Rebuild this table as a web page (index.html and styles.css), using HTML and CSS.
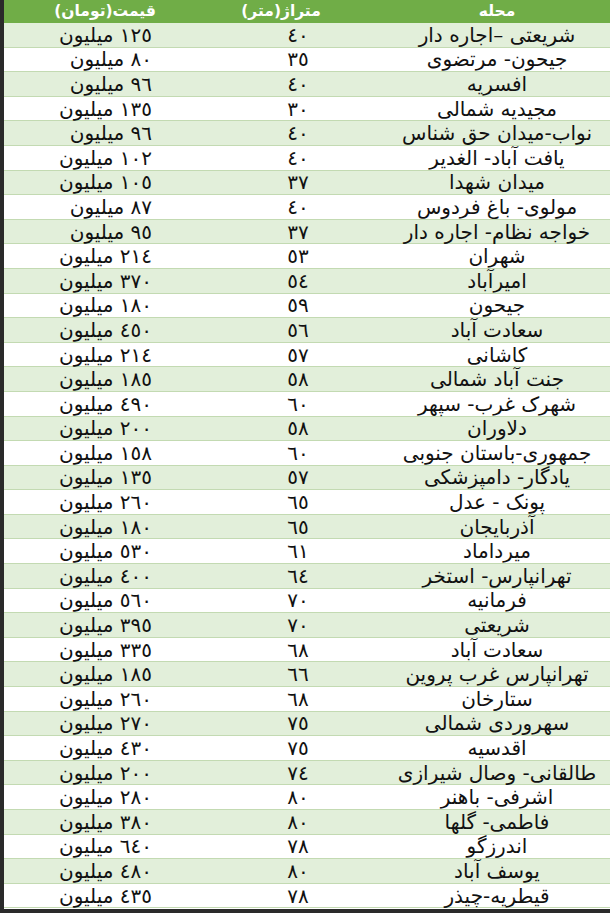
FILE: index.html
```html
<!DOCTYPE html>
<html lang="fa" dir="rtl">
<head>
<meta charset="utf-8">
<title>قیمت آپارتمان</title>
<link rel="stylesheet" href="styles.css">
</head>
<body>
<div class="sheet">
  <div class="row head"><div class="c name">محله</div><div class="c area">متراژ(متر)</div><div class="c price">قیمت(تومان)</div></div>
  <div class="row band"><div class="c name">شریعتی –اجاره دار</div><div class="c area">٤٠</div><div class="c price">١٢٥ میلیون</div></div>
  <div class="row"><div class="c name">جیحون- مرتضوی</div><div class="c area">٣٥</div><div class="c price">٨٠ میلیون</div></div>
  <div class="row band"><div class="c name">افسریه</div><div class="c area">٤٠</div><div class="c price">٩٦ میلیون</div></div>
  <div class="row"><div class="c name">مجیدیه شمالی</div><div class="c area">٣٠</div><div class="c price">١٣٥ میلیون</div></div>
  <div class="row band"><div class="c name">نواب-میدان حق شناس</div><div class="c area">٤٠</div><div class="c price">٩٦ میلیون</div></div>
  <div class="row"><div class="c name">یافت آباد- الغدیر</div><div class="c area">٤٠</div><div class="c price">١٠٢ میلیون</div></div>
  <div class="row band"><div class="c name">میدان شهدا</div><div class="c area">٣٧</div><div class="c price">١٠٥ میلیون</div></div>
  <div class="row"><div class="c name">مولوی- باغ فردوس</div><div class="c area">٤٠</div><div class="c price">٨٧ میلیون</div></div>
  <div class="row band"><div class="c name">خواجه نظام- اجاره دار</div><div class="c area">٣٧</div><div class="c price">٩٥ میلیون</div></div>
  <div class="row"><div class="c name">شهران</div><div class="c area">٥٣</div><div class="c price">٢١٤ میلیون</div></div>
  <div class="row band"><div class="c name">امیرآباد</div><div class="c area">٥٤</div><div class="c price">٣٧٠ میلیون</div></div>
  <div class="row"><div class="c name">جیحون</div><div class="c area">٥٩</div><div class="c price">١٨٠ میلیون</div></div>
  <div class="row band"><div class="c name">سعادت آباد</div><div class="c area">٥٦</div><div class="c price">٤٥٠ میلیون</div></div>
  <div class="row"><div class="c name">کاشانی</div><div class="c area">٥٧</div><div class="c price">٢١٤ میلیون</div></div>
  <div class="row band"><div class="c name">جنت آباد شمالی</div><div class="c area">٥٨</div><div class="c price">١٨٥ میلیون</div></div>
  <div class="row"><div class="c name">شهرک غرب- سپهر</div><div class="c area">٦٠</div><div class="c price">٤٩٠ میلیون</div></div>
  <div class="row band"><div class="c name">دلاوران</div><div class="c area">٥٨</div><div class="c price">٢٠٠ میلیون</div></div>
  <div class="row"><div class="c name">جمهوری-باستان جنوبی</div><div class="c area">٦٠</div><div class="c price">١٥٨ میلیون</div></div>
  <div class="row band"><div class="c name">یادگار- دامپزشکی</div><div class="c area">٥٧</div><div class="c price">١٣٥ میلیون</div></div>
  <div class="row"><div class="c name">پونک - عدل</div><div class="c area">٦٥</div><div class="c price">٢٦٠ میلیون</div></div>
  <div class="row band"><div class="c name">آذربایجان</div><div class="c area">٦٥</div><div class="c price">١٨٠ میلیون</div></div>
  <div class="row"><div class="c name">میرداماد</div><div class="c area">٦١</div><div class="c price">٥٣٠ میلیون</div></div>
  <div class="row band"><div class="c name">تهرانپارس- استخر</div><div class="c area">٦٤</div><div class="c price">٤٠٠ میلیون</div></div>
  <div class="row"><div class="c name">فرمانیه</div><div class="c area">٧٠</div><div class="c price">٥٦٠ میلیون</div></div>
  <div class="row band"><div class="c name">شریعتی</div><div class="c area">٧٠</div><div class="c price">٣٩٥ میلیون</div></div>
  <div class="row"><div class="c name">سعادت آباد</div><div class="c area">٦٨</div><div class="c price">٣٣٥ میلیون</div></div>
  <div class="row band"><div class="c name">تهرانپارس غرب پروین</div><div class="c area">٦٦</div><div class="c price">١٨٥ میلیون</div></div>
  <div class="row"><div class="c name">ستارخان</div><div class="c area">٦٨</div><div class="c price">٢٦٠ میلیون</div></div>
  <div class="row band"><div class="c name">سهروردی شمالی</div><div class="c area">٧٥</div><div class="c price">٢٧٠ میلیون</div></div>
  <div class="row"><div class="c name">اقدسیه</div><div class="c area">٧٥</div><div class="c price">٤٣٠ میلیون</div></div>
  <div class="row band"><div class="c name">طالقانی- وصال شیرازی</div><div class="c area">٧٤</div><div class="c price">٢٠٠ میلیون</div></div>
  <div class="row"><div class="c name">اشرفی- باهنر</div><div class="c area">٨٠</div><div class="c price">٢٨٠ میلیون</div></div>
  <div class="row band"><div class="c name">فاطمی- گلها</div><div class="c area">٨٠</div><div class="c price">٣٨٠ میلیون</div></div>
  <div class="row"><div class="c name">اندرزگو</div><div class="c area">٧٨</div><div class="c price">٦٤٠ میلیون</div></div>
  <div class="row band"><div class="c name">یوسف آباد</div><div class="c area">٨٠</div><div class="c price">٤٨٠ میلیون</div></div>
  <div class="row"><div class="c name">قیطریه-چیذر</div><div class="c area">٧٨</div><div class="c price">٤٣٥ میلیون</div></div>
</div>
</body>
</html>
```
FILE: styles.css
```css
html, body {
  margin: 0;
  padding: 0;
}
body {
  background: #2a2a2a;
  width: 610px;
  height: 913px;
  overflow: hidden;
  font-family: "DejaVu Sans", sans-serif;
  color: #111;
}
.sheet {
  width: 606px;
  height: 909px;
  background: #ffffff;
  display: flex;
  flex-direction: column;
  direction: rtl;
}
.row {
  display: grid;
  grid-template-columns: 220px 184px 202px;
  height: 24.6px;
  box-sizing: border-box;
  border-bottom: 1px solid #c3dab2;
  background: #ffffff;
}
.row.band {
  background: #e2efda;
}
.row.head {
  height: 23px;
  background: #70ad47;
  color: #ffffff;
  font-weight: bold;
  border-bottom: none;
}
.c {
  display: flex;
  align-items: center;
  font-size: 20px;
  line-height: 1;
  white-space: nowrap;
}
.head .c {
  font-size: 15.5px;
}
.name {
  justify-content: center;
  padding-right: 6px;
}
.area {
  justify-content: center;
}
.head .area {
  padding-right: 34px;
}
.price {
  justify-content: flex-start;
  padding-right: 54px;
}
.head .price {
  justify-content: center;
  padding-right: 0;
}
```
